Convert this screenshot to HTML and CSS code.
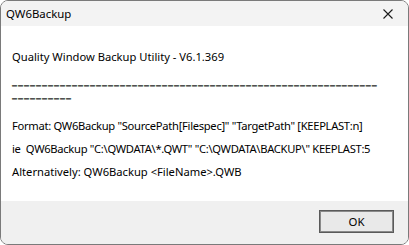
FILE: index.html
```html
<!DOCTYPE html>
<html>
<head>
<meta charset="utf-8">
<link rel="stylesheet" href="styles.css">
</head>
<body>
<div class="window">
  <div class="titlebar">
    <span class="title">QW6Backup</span>
    <svg class="close" width="10" height="10" viewBox="0 0 10 10"><path d="M0.5 0.5 L9.5 9.5 M9.5 0.5 L0.5 9.5" stroke="#1a1a1a" stroke-width="1.1" fill="none"/></svg>
  </div>
  <div class="content">
    <p class="line first">Quality Window Backup Utility - V6.1.369</p>
    <p class="dashes">_______________________________________________________________________</p>
    <p class="line tight">Format: QW6Backup "SourcePath[Filespec]" "TargetPath" [KEEPLAST:n]</p>
    <p class="line tight">ie&nbsp; QW6Backup "C:\QWDATA\*.QWT" "C:\QWDATA\BACKUP\" KEEPLAST:5</p>
    <p class="line">Alternatively: QW6Backup &lt;FileName&gt;.QWB</p>
  </div>
  <div class="footer">
    <button class="ok">OK</button>
  </div>
</div>
</body>
</html>
```
FILE: styles.css
```css
html, body { margin: 0; padding: 0; background: #ffffff; }
body { font-family: "Noto Sans", "Open Sans", sans-serif; font-size: 11.2px; color: #000; }
.window {
  width: 409px; height: 245px; box-sizing: border-box;
  border: 1px solid #7a7a7a; border-radius: 8px; overflow: hidden;
  display: flex; flex-direction: column; background: #fff;
}
.titlebar {
  height: 25px; background: #f3f3f3; display: flex; align-items: center;
  justify-content: space-between; padding: 0 15px 0 5px; flex: none;
}
.title { font-size: 11.4px; color: #000; }
.content { flex: 1; background: #fff; padding: 24px 12px 0 11px; }
.line { margin: 0 0 9px 0; line-height: 14px; white-space: nowrap; }
.tight { letter-spacing: -0.3px; }
.dashes {
  font-family: "Liberation Mono", monospace; font-size: 8.33px; letter-spacing: 1px; font-weight: bold;
  word-break: break-all; line-height: 13px; width: 366px; margin: 13px 0 16px 0; color: #000;
  text-shadow: 0 0.5px 0 #000, 0 -0.3px 0 #000;
}
.footer { height: 43px; background: #f0f0f0; flex: none; display: flex; justify-content: flex-end; align-items: flex-start; padding: 9px 14px 0 0; box-sizing: border-box; }
.ok {
  width: 75px; height: 23px; box-sizing: border-box; background: #e9e9e9;
  border: 1px solid #5a5a5a; box-shadow: inset 0 0 0 1px #8a8a8a; border-radius: 0;
  font-family: inherit; font-size: 11.4px; color: #000; padding: 0;
}
```
